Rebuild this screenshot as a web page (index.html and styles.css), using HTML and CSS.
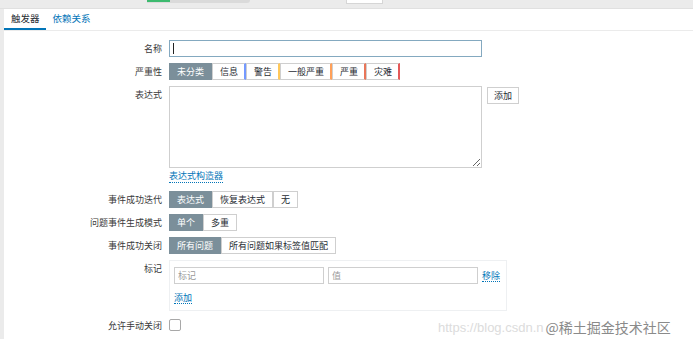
FILE: index.html
```html
<!DOCTYPE html>
<html>
  <head>
    <title>触发器</title>
    <link rel="stylesheet" href="styles.css">
  </head>
  <body>
    <div class="topbar">
      <span class="progress"><span class="progress-done"></span></span>
      <span class="topbox"></span>
    </div>

    <div class="panel">
      <ul class="tabs">
        <li class="tab tab-active">触发器</li>
        <li class="tab"><a class="tab-link">依赖关系</a></li>
      </ul>

      <div class="form">
        <div class="form-row">
          <label class="label">名称</label>
          <div class="text-box name-box"><span class="caret"></span></div>
        </div>

        <div class="form-row">
          <label class="label">严重性</label>
          <div class="btn-group">
            <span class="btn btn-on">未分类</span>
            <span class="btn sev-info">信息</span>
            <span class="btn sev-warn">警告</span>
            <span class="btn sev-avg">一般严重</span>
            <span class="btn sev-high">严重</span>
            <span class="btn sev-disaster">灾难</span>
          </div>
        </div>

        <div class="form-row">
          <label class="label">表达式</label>
          <textarea class="expr"></textarea>
          <span class="btn btn-add">添加</span>
        </div>

        <div class="form-row row-link">
          <span class="label"></span>
          <a class="link">表达式构造器</a>
        </div>

        <div class="form-row">
          <label class="label">事件成功迭代</label>
          <div class="btn-group">
            <span class="btn btn-on">表达式</span>
            <span class="btn">恢复表达式</span>
            <span class="btn">无</span>
          </div>
        </div>

        <div class="form-row">
          <label class="label">问题事件生成模式</label>
          <div class="btn-group">
            <span class="btn btn-on">单个</span>
            <span class="btn">多重</span>
          </div>
        </div>

        <div class="form-row">
          <label class="label">事件成功关闭</label>
          <div class="btn-group">
            <span class="btn btn-on">所有问题</span>
            <span class="btn">所有问题如果标签值匹配</span>
          </div>
        </div>

        <div class="form-row">
          <label class="label">标记</label>
          <div class="tags">
            <div class="tag-row">
              <input class="tag-input" placeholder="标记">
              <input class="tag-input" placeholder="值">
              <a class="link">移除</a>
            </div>
            <a class="link">添加</a>
          </div>
        </div>

        <div class="form-row row-check">
          <label class="label">允许手动关闭</label>
          <span class="checkbox"></span>
        </div>
      </div>
    </div>

    <div class="watermark">
      <span class="wm-url">https://blog.csdn.n</span>
      <span class="wm-name">@稀土掘金技术社区</span>
    </div>
  </body>
</html>
```

FILE: styles.css
```css
body { margin: 0; background: #ebebeb; font-family: "Noto Sans CJK SC", "Liberation Sans", sans-serif; color: #3a3a3a; font-size: 9px; overflow: hidden; }

/* cut-off header strip */
.topbar { height: 8px; display: flex; padding-left: 147px; border-bottom: 1px solid #e0e0e0; }
.progress { width: 103px; height: 3px; background: #dadada; border-radius: 0 0 4px 0; display: flex; }
.progress-done { width: 23px; height: 2px; background: #3dba6f; }
.topbox { width: 35px; height: 3px; margin-left: 96px; background: #fff; border: 1px solid #d6d6d6; border-top: 0; }

.panel { margin-left: 4px; background: #fff; height: 340px; }

.tabs { list-style: none; margin: 0; padding: 0; display: flex; height: 21px; border-bottom: 1px solid #ebebeb; }
.tab { padding: 0 7px; font-size: 9.5px; line-height: 19px; height: 19px; color: #1f2c33; }
.tab-active { border-bottom: 2px solid #0275b8; padding-right: 6px; }
.tab-link { color: #0275b8; }

.form { padding-top: 9px; }
.form-row { display: flex; align-items: flex-start; gap: 7px; margin-bottom: 6px; }
.label { width: 158px; flex-shrink: 0; text-align: right; line-height: 17px; color: #3a3a3a; }
.row-link { margin-top: -4px; margin-bottom: 8px; }
.row-link .link { line-height: 12px; }
.row-check { margin-top: 6px; }

.text-box { height: 15px; border: 1px solid #84a9c0; display: flex; align-items: center; padding-left: 3px; }
.name-box { width: 308px; }
.caret { width: 1px; height: 11px; background: #222; }

.btn-group { display: flex; }
.btn { display: inline-block; height: 15px; line-height: 15px; padding: 0 7px; border: 1px solid #cfcfcf; background: #fff; color: #1f2c33; white-space: nowrap; }
.btn-on { background: #7b8f9a; border-color: #7b8f9a; color: #fff; }
.sev-info { border-right: 2px solid #7499ff; padding-right: 6px; }
.sev-warn { border-right: 2px solid #ffc859; padding-right: 6px; }
.sev-avg { border-right: 2px solid #ffa059; padding-right: 6px; }
.sev-high { border-right: 2px solid #e97659; padding-right: 6px; }
.sev-disaster { border-right: 2px solid #e45959; padding-right: 6px; }

.expr { width: 311px; height: 80px; margin: 0; border: 1px solid #cfcfcf; padding: 0; resize: both; font: inherit; }
.btn-add { margin-left: -2px; margin-top: 1px; padding: 0 6px; }

.link { color: #0275b8; border-bottom: 1px dotted #0275b8; line-height: 11px; display: inline-block; white-space: nowrap; }

.tags { width: 328px; border: 1px solid #eef0f2; padding: 6px 4px 6px 4px; }
.tag-row { display: flex; align-items: center; gap: 4px; margin-bottom: 7px; }
.tag-input { width: 142px; height: 15px; margin: 0; padding: 0 3px; border: 1px solid #cfcfcf; font: inherit; font-size: 9px; color: #333; }
.tag-input::placeholder { color: #9a9a9a; }

.checkbox { width: 10px; height: 10px; border: 1px solid #a8a8a8; border-radius: 2px; margin-top: 2px; background: #fff; }

/* screenshot watermark, sits over the page */
.watermark { position: absolute; left: 438px; top: 317px; display: flex; align-items: center; }
.wm-url { font-family: "Liberation Sans", sans-serif; font-size: 13px; color: #dcdcdc; }
.wm-name { margin-left: 2px; font-size: 14px; color: #8a8a8a; text-shadow: 0 0 2px #fff; }
```
